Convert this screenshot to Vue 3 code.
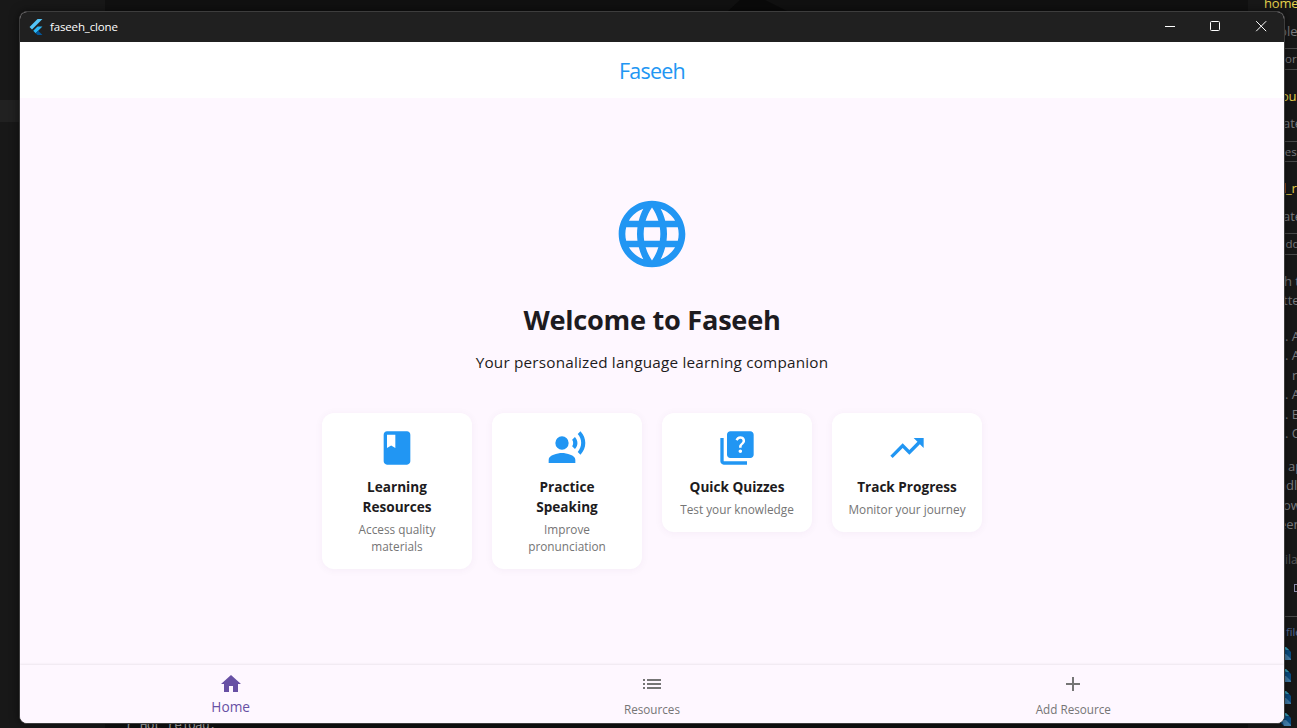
<script setup>
const cards = [
  {
    lines: ['Learning', 'Resources'],
    sub: ['Access quality', 'materials'],
    kind: 'learn',
    path: 'M18 2H6c-1.1 0-2 .9-2 2v16c0 1.1.9 2 2 2h12c1.1 0 2-.9 2-2V4c0-1.1-.9-2-2-2zM6 4h5v8l-2.5-1.5L6 12V4z'
  },
  {
    lines: ['Practice', 'Speaking'],
    sub: ['Improve', 'pronunciation'],
    kind: 'speak',
    path: 'M9 5a4 4 0 1 0 0 8a4 4 0 1 0 0-8zM9 15c-2.67 0-8 1.34-8 4v2h16v-2c0-2.66-5.33-4-8-4zm7.76-9.64l-1.68 1.69c.84 1.18.84 2.71 0 3.89l1.68 1.69c2.02-2.02 2.02-5.07 0-7.27zM20.07 2l-1.63 1.63c2.77 3.02 2.77 7.56 0 10.74L20.07 16c3.9-3.89 3.91-9.95 0-14z'
  },
  {
    lines: ['Quick Quizzes'],
    sub: ['Test your knowledge'],
    kind: 'quiz',
    path: 'M4 6H2v14c0 1.1.9 2 2 2h14v-2H4V6zM20 2H8c-1.1 0-2 .9-2 2v12c0 1.1.9 2 2 2h12c1.1 0 2-.9 2-2V4c0-1.1-.9-2-2-2zm-5.99 13c-.59 0-1.05-.47-1.05-1.05 0-.59.47-1.04 1.05-1.04.59 0 1.04.45 1.04 1.04-.01.58-.45 1.05-1.04 1.05zm2.5-6.17c-.63.93-1.23 1.21-1.56 1.81-.13.24-.18.4-.18 1.18h-1.52c0-.41-.06-1.08.26-1.65.41-.73 1.18-1.16 1.63-1.8.48-.68.21-1.94-1.14-1.94-.88 0-1.32.67-1.5 1.23l-1.37-.57C11.51 5.96 12.52 5 13.99 5c1.23 0 2.08.56 2.51 1.26.37.61.58 1.73.01 2.57z'
  },
  {
    lines: ['Track Progress'],
    sub: ['Monitor your journey'],
    kind: 'track',
    path: 'M16 6l2.29 2.29-4.88 4.88-4-4L2 16.59 3.41 18l6-6 4 4 6.3-6.29L22 12V6z'
  }
]

const tabs = [
  { label: 'Home', kind: 'home', path: 'M10 20v-6h4v6h5v-8h3L12 3 2 12h3v8z' },
  { label: 'Resources', kind: 'list', path: 'M3 13h2v-2H3v2zm0 4h2v-2H3v2zm0-8h2V7H3v2zm4 4h14v-2H7v2zm0 4h14v-2H7v2zM7 7v2h14V7H7z' },
  { label: 'Add Resource', kind: 'add', path: 'M19 13h-6v6h-2v-6H5v-2h6V5h2v6h6v2z' }
]

// Text of the editor window that shows beside the app window: centre line y, left x
const behind = [
  { t: 'home', x: 1264, y: 3, c: 'yellow' },
  { t: 'ple', x: 1279, y: 31, c: 'grey' },
  { t: 'hor', x: 1278, y: 59, c: 'small' },
  { t: 'our', x: 1281, y: 96, c: 'yellow' },
  { t: 'ate', x: 1283, y: 123, c: 'grey' },
  { t: 'reso', x: 1280, y: 152, c: 'small' },
  { t: 'l_re', x: 1283, y: 188, c: 'yellow' },
  { t: 'ate', x: 1283, y: 216, c: 'grey' },
  { t: 'add', x: 1279, y: 244, c: 'small' },
  { t: 'h t', x: 1284, y: 281, c: 'grey' },
  { t: 'tte', x: 1283, y: 300, c: 'grey' },
  { t: '. A', x: 1285, y: 336, c: 'grey' },
  { t: '. A', x: 1285, y: 355, c: 'grey' },
  { t: 'r', x: 1292, y: 375, c: 'grey' },
  { t: '. A', x: 1285, y: 394, c: 'grey' },
  { t: '. E', x: 1285, y: 414, c: 'grey' },
  { t: '. C', x: 1285, y: 433, c: 'grey' },
  { t: 'ap', x: 1288, y: 466, c: 'grey' },
  { t: 'ndl', x: 1278, y: 485, c: 'grey' },
  { t: 'ow', x: 1283, y: 505, c: 'grey' },
  { t: 'een', x: 1279, y: 524, c: 'grey' },
  { t: 'ila', x: 1285, y: 560, c: 'dim' },
  { t: 'file', x: 1286, y: 632, c: 'blue' }
]
const rules = [48, 69, 141, 161, 233, 254, 616]
const marks = [654, 676, 698, 720]
</script>

<template>
  <div class="desktop">
    <div class="backdrop">
      <div class="side"></div>
      <div class="side-row"></div>
      <div class="right-pane"></div>
      <svg class="peak" width="62" height="12" viewBox="0 0 62 12"><path d="M0 12L13 0h25l24 12z" /></svg>
      <span v-for="(b, i) in behind" :key="i" class="code" :class="b.c" :style="{ left: b.x + 'px', top: b.y - 10 + 'px' }">{{ b.t }}</span>
      <i v-for="r in rules" :key="'r' + r" class="rule" :style="{ top: r + 'px' }"></i>
      <i class="box"></i>
      <svg v-for="m in marks" :key="'m' + m" class="mark" :style="{ top: m - 7 + 'px' }" width="14" height="14" viewBox="0 0 14 14">
        <path fill="#0a4f86" d="M2 0h6l5 5v8H6L0 7z" />
        <path fill="#3aa5bd" d="M5 0h3l3 3H8z" />
        <path fill="#4480ad" d="M4 7h4l5 5v1H6z" />
      </svg>
      <span class="terminal">r Hot reload.</span>
    </div>

    <div class="window">
      <header class="titlebar">
        <svg class="logo" width="16" height="16" viewBox="0 0 24 24">
          <path fill="#54c5f8" d="M14.3 0L2.3 12 6 15.7 21.7 0z" />
          <path fill="#29b6f6" d="M14.3 11.07L7.86 17.53l3.7 3.7 10.14-10.16z" />
          <path fill="#01579b" d="M11.5 21.2l3.7-3.67L21.7 24h-7.4z" />
        </svg>
        <span class="app-name">faseeh_clone</span>
        <div class="controls">
          <svg width="46" height="30" viewBox="0 0 46 30"><path d="M18 14.5h10" /></svg>
          <svg width="46" height="30" viewBox="0 0 46 30"><rect x="17.5" y="9.5" width="9" height="9" rx="1" /></svg>
          <svg width="46" height="30" viewBox="0 0 46 30"><path d="M17.2 9.2l10 10M27.2 9.2l-10 10" /></svg>
        </div>
      </header>

      <div class="appbar"><span class="brand">Faseeh</span></div>

      <main class="content">
        <svg class="globe" width="80" height="80" viewBox="0 0 24 24">
          <path d="M11.99 2C6.47 2 2 6.48 2 12s4.47 10 9.99 10C17.52 22 22 17.52 22 12S17.52 2 11.99 2zm6.93 6h-2.95c-.32-1.25-.78-2.45-1.38-3.56 1.84.63 3.37 1.91 4.33 3.56zM12 4.04c.83 1.2 1.48 2.53 1.91 3.96h-3.82c.43-1.43 1.08-2.76 1.91-3.96zM4.26 14C4.1 13.36 4 12.69 4 12s.1-1.36.26-2h3.38c-.08.66-.14 1.32-.14 2 0 .68.06 1.34.14 2H4.26zm.82 2h2.95c.32 1.25.78 2.45 1.38 3.56-1.84-.63-3.37-1.9-4.33-3.56zm2.95-8H5.08c.96-1.66 2.49-2.93 4.33-3.56C8.81 5.55 8.35 6.75 8.03 8zM12 19.96c-.83-1.2-1.48-2.53-1.91-3.96h3.82c-.43 1.43-1.08 2.76-1.91 3.96zM14.34 14H9.66c-.09-.66-.16-1.32-.16-2 0-.68.07-1.35.16-2h4.68c.09.65.16 1.32.16 2 0 .68-.07 1.34-.16 2zm.25 5.56c.6-1.11 1.06-2.31 1.38-3.56h2.95c-.96 1.65-2.49 2.93-4.33 3.56zM16.36 14c.08-.66.14-1.32.14-2 0-.68-.06-1.34-.14-2h3.38c.16.64.26 1.31.26 2s-.1 1.36-.26 2h-3.38z" />
        </svg>
        <h1>Welcome to Faseeh</h1>
        <p class="tagline">Your personalized language learning companion</p>
        <section class="cards">
          <article v-for="c in cards" :key="c.kind" class="card" :class="c.kind">
            <svg width="40" height="40" viewBox="0 0 24 24"><path fill-rule="evenodd" :d="c.path" /></svg>
            <h2><span v-for="l in c.lines" :key="l">{{ l }}</span></h2>
            <p><span v-for="l in c.sub" :key="l">{{ l }}</span></p>
          </article>
        </section>
      </main>

      <nav class="tabs">
        <div v-for="t in tabs" :key="t.kind" class="tab" :class="t.kind">
          <svg width="24" height="24" viewBox="0 0 24 24"><path :d="t.path" /></svg>
          <span>{{ t.label }}</span>
        </div>
      </nav>
    </div>
  </div>
</template>

<style>
body { margin: 0; background: #141414; overflow: hidden; }
</style>

<style scoped>
* { box-sizing: border-box; }
.desktop {
  position: relative;
  width: 1297px;
  height: 728px;
  padding: 11px 12px 4px 19px;
  overflow: hidden;
  background: #111;
  font-family: "Open Sans", "Noto Sans", sans-serif;
}
.backdrop { position: absolute; inset: 0; }
.side { position: absolute; left: 0; top: 0; width: 105px; height: 728px; background: #181818; }
.side-row { position: absolute; left: 0; top: 100px; width: 105px; height: 22px; background: #212121; }
.right-pane { position: absolute; left: 1248px; top: 0; width: 49px; height: 728px; background: #181818; }
.peak { position: absolute; left: 727px; top: 0; fill: #0a0a0a; }
.code { position: absolute; line-height: 20px; font-size: 13px; white-space: pre; }
.yellow { color: #e8d44d; font-size: 13px; font-weight: 500; letter-spacing: -0.2px; }
.grey { color: #7c7c80; }
.small { color: #7c7c80; font-size: 11.5px; }
.dim { color: #58585c; font-size: 12px; }
.blue { color: #526a9a; font-size: 11px; }
.rule { position: absolute; left: 1280px; width: 17px; height: 1px; background: #4a4a4a; }
.box { position: absolute; left: 1294px; top: 584px; width: 8px; height: 8px; border: 1px solid #8b8ba8; }
.mark { position: absolute; left: 1278px; }
.terminal {
  position: absolute;
  left: 126px;
  top: 716px;
  color: #a9a9a9;
  font: 13px/20px "Liberation Mono", monospace;
  letter-spacing: -0.9px;
}
.window {
  position: relative;
  display: flex;
  flex-direction: column;
  width: 1266px;
  height: 713px;
  border: 1px solid #3d3d3d;
  border-radius: 8px;
  overflow: hidden;
  background: #fef7ff;
  box-shadow: 0 0 10px rgba(0, 0, 0, 0.55);
}
.titlebar {
  display: flex;
  flex: none;
  align-items: center;
  height: 30px;
  padding-left: 8px;
  background: #202020;
  color: #fff;
}
.logo { margin-top: -1px; }
.app-name { margin-left: 6px; font-size: 11.5px; line-height: 16px; letter-spacing: -0.15px; }
.controls { display: flex; margin-left: auto; margin-right: -1px; }
.controls svg { fill: none; stroke: #fff; stroke-width: 1; }
.appbar {
  display: flex;
  flex: none;
  align-items: center;
  justify-content: center;
  height: 56px;
  background: #fff;
}
.brand { color: #2196f3; font-size: 21.5px; line-height: 28px; letter-spacing: -0.8px; margin-top: 2px; }
.content { display: flex; flex: 1; flex-direction: column; align-items: center; padding-top: 96px; }
.globe { flex: none; fill: #2196f3; }
h1 { margin: 28px 0 0; color: #1d1b20; font-size: 27.2px; line-height: 36px; font-weight: 700; letter-spacing: -0.28px; white-space: nowrap; }
.tagline { margin: 12px 0 0; color: #1d1b20; font-size: 15.3px; line-height: 24px; letter-spacing: 0.19px; white-space: nowrap; }
.cards { display: flex; align-items: flex-start; gap: 20px; margin-top: 39px; }
.card {
  display: flex;
  flex-direction: column;
  align-items: center;
  width: 150px;
  padding: 15px 0 14px;
  border-radius: 12px;
  background: #fff;
  box-shadow: 0 1px 8px rgba(80, 40, 90, 0.05);
}
.card svg { fill: #2196f3; }
h2, .card p { display: flex; flex-direction: column; align-items: center; white-space: nowrap; }
h2 { margin: 9px 0 0; color: #1d1b20; font-size: 13.6px; line-height: 20px; font-weight: 700; }
.card p { margin: 4px 0 0; color: #757575; font-size: 11.8px; line-height: 17px; }
.tabs {
  display: grid;
  grid-template-columns: repeat(3, 1fr);
  flex: none;
  height: 58px;
  background: #fef7ff;
  box-shadow: 0 -1px 2px rgba(0, 0, 0, 0.07);
}
.tab { display: flex; flex-direction: column; align-items: center; padding-top: 7px; color: #757575; font-size: 11.7px; line-height: 18px; }
.tab svg { fill: currentColor; }
.tab span { margin-top: 4px; }
.tab.home { color: #6750a4; font-size: 13.7px; }
.tab.home span { margin-top: 2px; }
</style>
